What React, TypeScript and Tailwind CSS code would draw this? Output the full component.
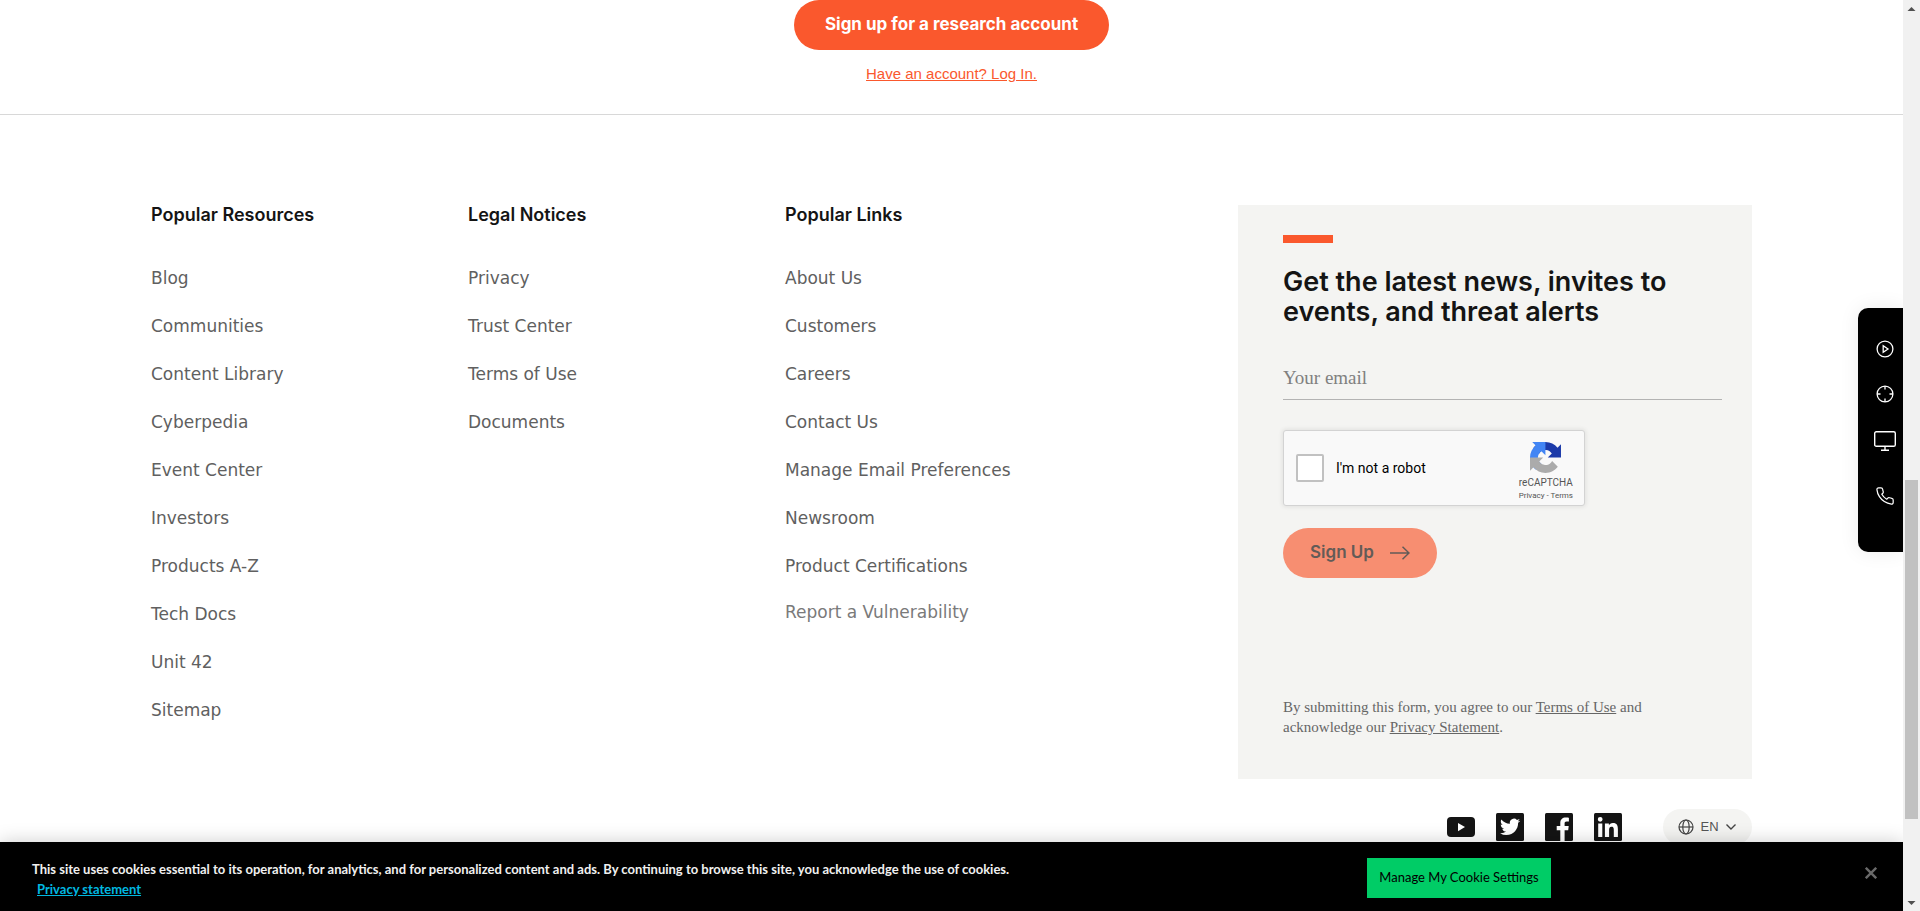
import { useId } from "react";
import type { ReactNode } from "react";

const columns = [
  {
    title: "Popular Resources",
    links: ["Blog", "Communities", "Content Library", "Cyberpedia", "Event Center", "Investors", "Products A-Z", "Tech Docs", "Unit 42", "Sitemap"],
  },
  { title: "Legal Notices", links: ["Privacy", "Trust Center", "Terms of Use", "Documents"] },
  {
    title: "Popular Links",
    links: ["About Us", "Customers", "Careers", "Contact Us", "Manage Email Preferences", "Newsroom", "Product Certifications"],
    extra: "Report a Vulnerability",
  },
];

function SignUpPrompt() {
  return (
    <section className="flex flex-col items-center border-b border-[#d8d8d8] pb-7">
      <button type="button" className="h-[50px] w-[315px] rounded-full bg-[#fa582d] font-['Inter',sans-serif] text-[17px] font-bold text-white">
        Sign up for a research account
      </button>
      <a href="#login" className="mt-3 font-['Liberation_Sans',sans-serif] text-[15px] leading-6 text-[#fa582d] underline">
        Have an account? Log In.
      </a>
    </section>
  );
}

function LinkColumn({ title, links, extra }: { title: string; links: string[]; extra?: string }) {
  return (
    <nav aria-label={title} className="pt-0.5 font-['DejaVu_Sans',sans-serif]">
      <h2 className="font-['Inter',sans-serif] text-[18px] font-semibold leading-4 text-[#141414]">{title}</h2>
      <ul className="mt-8 text-[17px] text-[#606060]">
        {links.map((label) => (
          <li key={label} className="flex h-12 items-center whitespace-nowrap">
            <a href="#">{label}</a>
          </li>
        ))}
        {extra && (
          <li className="flex h-11 items-center whitespace-nowrap text-[#7a7a7a]">
            <a href="#">{extra}</a>
          </li>
        )}
      </ul>
    </nav>
  );
}

function RecaptchaLogo() {
  return (
    <svg viewBox="0 0 64 64" className="size-[31px]" aria-hidden="true">
      <path fill="#1c3aa9" d="M64 31.955l-.033-1.37V4.687l-7.16 7.16C50.948 4.674 42.033.093 32.05.093c-10.4 0-19.622 4.96-25.458 12.64l11.736 11.86a15.55 15.55 0 0 1 4.754-5.334c2.05-1.6 4.952-2.906 8.968-2.906.485 0 .86.057 1.135.163 4.976.393 9.288 3.14 11.828 7.124l-8.307 8.307L64 31.953" />
      <path fill="#4285f4" d="M31.862.094l-1.37.033H4.594l7.16 7.16C4.58 13.147 0 22.06 0 32.046c0 10.4 4.96 19.622 12.64 25.458L24.5 45.768a15.55 15.55 0 0 1-5.334-4.754c-1.6-2.05-2.906-4.952-2.906-8.968 0-.485.057-.86.163-1.135.393-4.976 3.14-9.288 7.124-11.828l8.307 8.307L31.86.095" />
      <path fill="#ababab" d="M.001 32.045l.033 1.37v25.898l7.16-7.16c5.86 7.173 14.774 11.754 24.76 11.754 10.4 0 19.622-4.96 25.458-12.64l-11.736-11.86a15.55 15.55 0 0 1-4.754 5.334c-2.05 1.6-4.952 2.906-8.968 2.906-.485 0-.86-.057-1.135-.163-4.976-.393-9.288-3.14-11.828-7.124l8.307-8.307c-10.522.04-22.4.066-27.295-.005" />
    </svg>
  );
}

function Newsletter() {
  const id = useId();
  return (
    <form className="flex min-h-[574px] flex-col items-start bg-[#f4f4f2] pb-[42px] pl-[45px] pr-[30px] pt-[30px]" onSubmit={(e) => e.preventDefault()}>
      <div className="h-2 w-[50px] bg-[#fa582d]" />
      <h2 className="mt-6 font-['Inter',sans-serif] text-[27px] font-semibold leading-[30px] text-[#141414]">
        Get the latest news, invites to
        <br />
        events, and threat alerts
      </h2>
      <input
        type="email"
        aria-label="Your email"
        placeholder="Your email"
        className="mt-7 h-[45px] w-full border-b border-[#b3b3b3] bg-transparent pt-0.5 font-['Liberation_Serif',serif] text-[19px] outline-none placeholder:text-[#808080]"
      />
      <div className="mt-[30px] flex h-[76px] w-[302px] items-center rounded-[3px] border border-[#d3d3d3] bg-[#f9f9f9] pl-3 pr-[11px] font-['Roboto',sans-serif] shadow-[0_0_4px_1px_rgba(0,0,0,0.08)]">
        <input id={id} type="checkbox" className="size-7 appearance-none rounded-xs border-2 border-[#c1c1c1] bg-white" />
        <label htmlFor={id} className="ml-3 flex-1 text-sm text-black">
          I'm not a robot
        </label>
        <div className="flex flex-col items-center pt-1.5 text-[#555]">
          <RecaptchaLogo />
          <span className="mt-1 text-[10px] leading-3">reCAPTCHA</span>
          <span className="mt-0.5 text-[8px] leading-[10px]">
            <a href="#privacy">Privacy</a> - <a href="#terms">Terms</a>
          </span>
        </div>
      </div>
      <button type="submit" className="mt-[22px] flex h-[50px] w-[154px] items-center gap-4 rounded-full bg-[#f78e71] pl-[27px] font-['Inter',sans-serif] text-[17px] font-semibold text-[#635b57]">
        Sign Up
        <svg viewBox="0 0 20 14" className="h-[14px] w-5" fill="none" stroke="currentColor" strokeWidth="1.5" aria-hidden="true">
          <path d="M0 7h19M12.500.8 19 7l-6.500 6.200" />
        </svg>
      </button>
      <p className="mt-auto font-['Liberation_Serif',serif] text-[15px] leading-5 text-[#666]">
        By submitting this form, you agree to our{" "}
        <a href="#terms" className="underline">Terms of Use</a> and
        <br />
        acknowledge our{" "}
        <a href="#privacy" className="underline">Privacy Statement</a>.
      </p>
    </form>
  );
}

function SocialLink({ label, children }: { label: string; children: ReactNode }) {
  return (
    <a href="#" aria-label={label}>
      <svg viewBox="0 0 28 28" className="size-7">{children}</svg>
    </a>
  );
}

function SocialRow() {
  return (
    <div className="flex items-center justify-end gap-[21px] pt-[30px]">
      <SocialLink label="YouTube">
        <rect y="4" width="28" height="20" rx="4" fill="#141414" />
        <path d="M11 10v8.200l7-4.100z" fill="#fff" />
      </SocialLink>
      <SocialLink label="Twitter">
        <rect width="28" height="28" rx="1.500" fill="#141414" />
        <g transform="translate(4 3.800) scale(.84)">
          <path fill="#fff" d="M23.953 4.57a10 10 0 01-2.825.775 4.958 4.958 0 002.163-2.723c-.951.555-2.005.959-3.127 1.184a4.92 4.92 0 00-8.384 4.482C7.69 8.095 4.067 6.13 1.64 3.162a4.822 4.822 0 00-.666 2.475c0 1.71.87 3.213 2.188 4.096a4.904 4.904 0 01-2.228-.616v.06a4.923 4.923 0 003.946 4.827 4.996 4.996 0 01-2.212.085 4.936 4.936 0 004.604 3.417 9.867 9.867 0 01-6.102 2.105c-.39 0-.779-.023-1.17-.067a13.995 13.995 0 007.557 2.209c9.053 0 13.998-7.496 13.998-13.985 0-.21 0-.42-.015-.63A9.935 9.935 0 0024 4.59z" />
        </g>
      </SocialLink>
      <SocialLink label="Facebook">
        <rect width="28" height="28" rx="1.500" fill="#141414" />
        <path fill="#fff" d="M15.300 28V17.300h-3.600v-4.200h3.600V10c0-3.600 2.200-5.500 5.400-5.500 1.500 0 2.900.1 3.200.2v3.700h-2.200c-1.700 0-2.100.8-2.100 2v2.700h4.100l-.5 4.200h-3.600V28z" />
      </SocialLink>
      <SocialLink label="LinkedIn">
        <rect width="28" height="28" rx="1.500" fill="#141414" />
        <path fill="#fff" d="M4.200 10.500h4.100v13.400H4.200zM6.200 3.900a2.400 2.400 0 1 1 0 4.800 2.400 2.400 0 0 1 0-4.800zM10.900 10.500h4v1.800c.6-1 1.900-2.200 4-2.200 4.200 0 5 2.700 5 6.400v7.400h-4.100v-6.500c0-1.600 0-3.600-2.200-3.600s-2.500 1.700-2.500 3.400v6.700h-4.200z" />
      </SocialLink>
      <button type="button" className="ml-5 flex h-9 w-[89px] items-center justify-center gap-1.5 rounded-full bg-[#f4f4f2] font-['Liberation_Sans',sans-serif] text-[13px] text-[#555]">
        <svg viewBox="0 0 16 16" className="size-4" fill="none" stroke="#444" strokeWidth="1.200" aria-hidden="true">
          <circle cx="8" cy="8" r="7" />
          <ellipse cx="8" cy="8" rx="3.200" ry="7" />
          <path d="M1 8h14" />
        </svg>
        EN
        <svg viewBox="0 0 12 8" className="h-2 w-3" fill="none" stroke="#444" strokeWidth="1.400" aria-hidden="true">
          <path d="M1.500 1.500 6 6l4.500-4.500" />
        </svg>
      </button>
    </div>
  );
}

function SidePanel() {
  return (
    <aside className="absolute right-0 top-[308px] flex h-[244px] w-[45px] flex-col items-center rounded-l-[10px] bg-black pl-[9px] pt-8 text-white shadow-[0_0_20px_rgba(0,0,0,0.08)]">
      <button type="button" aria-label="Watch demo" className="size-[18px]">
        <svg viewBox="0 0 18 18" fill="none" stroke="currentColor" strokeWidth="1.300">
          <circle cx="9" cy="9" r="7.900" />
          <path d="M7.200 5.700v6.600L12 9z" />
        </svg>
      </button>
      <button type="button" aria-label="Under attack" className="mt-[27px] size-[18px]">
        <svg viewBox="0 0 18 18" fill="none" stroke="currentColor" strokeWidth="1.300">
          <circle cx="9" cy="9" r="7.900" />
          <path d="M9 1v3.500M9 13.500V17M1 9h3.500M13.500 9H17" />
        </svg>
      </button>
      <button type="button" aria-label="Products" className="mt-7 h-5 w-[22px]">
        <svg viewBox="0 0 22 20" fill="none" stroke="currentColor" strokeWidth="1.400">
          <rect x=".7" y=".7" width="20.600" height="14.600" rx="1.600" />
          <path d="M11 15.300v4M7 19.300h8" />
        </svg>
      </button>
      <button type="button" aria-label="Call us" className="mt-9 size-[18px]">
        <svg viewBox="1 1 22 22" fill="none" stroke="currentColor" strokeWidth="1.500" strokeLinejoin="round">
          <path d="M22 16.920v3a2 2 0 0 1-2.180 2 19.790 19.790 0 0 1-8.630-3.070 19.500 19.500 0 0 1-6-6 19.790 19.790 0 0 1-3.070-8.670A2 2 0 0 1 4.110 2h3a2 2 0 0 1 2 1.720c.127.960.362 1.903.7 2.810a2 2 0 0 1-.45 2.110L8.090 9.910a16 16 0 0 0 6 6l1.270-1.270a2 2 0 0 1 2.110-.45c.907.338 1.850.573 2.810.7A2 2 0 0 1 22 16.920z" />
        </svg>
      </button>
    </aside>
  );
}

function CookieBanner() {
  return (
    <section aria-label="Cookie notice" className="absolute inset-x-0 bottom-0 flex h-[69px] items-center bg-black px-8 font-['Lato',sans-serif] shadow-[0_0_18px_rgba(0,0,0,0.2)]">
      <p className="w-[1335px] pt-1 text-[13px] font-bold leading-5 text-[#f0f0f0]">
        This site uses cookies essential to its operation, for analytics, and for personalized content and ads. By continuing to browse this site, you acknowledge the use of cookies.
        <br />
        <a href="#privacy" className="ml-[5px] text-[#00b8e0] underline">Privacy statement</a>
      </p>
      <button type="button" className="mt-0.5 h-10 w-[184px] whitespace-nowrap bg-[#00cc66] text-[13px] text-black">
        Manage My Cookie Settings
      </button>
      <button type="button" aria-label="Close" className="mb-2 ml-auto mr-[-6px] size-3 text-[#696969]">
        <svg viewBox="0 0 12 12" fill="none" stroke="currentColor" strokeWidth="2.400">
          <path d="m.8.8 10.400 10.400M11.200.8.8 11.200" />
        </svg>
      </button>
    </section>
  );
}

function ScrollBar() {
  return (
    <div aria-hidden="true" className="flex w-[17px] shrink-0 flex-col items-center bg-[#f1f1f1]">
      <svg viewBox="0 0 17 17" className="size-[17px] shrink-0"><path d="M4.500 11 8.500 7l4 4z" fill="#505050" /></svg>
      <div className="grow-[463]" />
      <div className="w-[13px] grow-[339] bg-[#c1c1c1]" />
      <div className="grow-[75]" />
      <svg viewBox="0 0 17 17" className="size-[17px] shrink-0"><path d="m4.500 7 4 4 4-4z" fill="#505050" /></svg>
    </div>
  );
}

export default function App() {
  return (
    <div className="flex h-screen overflow-hidden bg-white">
      <div className="relative min-w-0 flex-1 overflow-hidden">
        <main>
          <SignUpPrompt />
          <footer className="mx-auto max-w-[1601px] pt-[90px]">
            <div className="grid grid-cols-[317fr_317fr_453fr_514fr]">
              {columns.map((c) => (
                <LinkColumn key={c.title} {...c} />
              ))}
              <Newsletter />
            </div>
            <SocialRow />
          </footer>
        </main>
        <SidePanel />
        <CookieBanner />
      </div>
      <ScrollBar />
    </div>
  );
}
